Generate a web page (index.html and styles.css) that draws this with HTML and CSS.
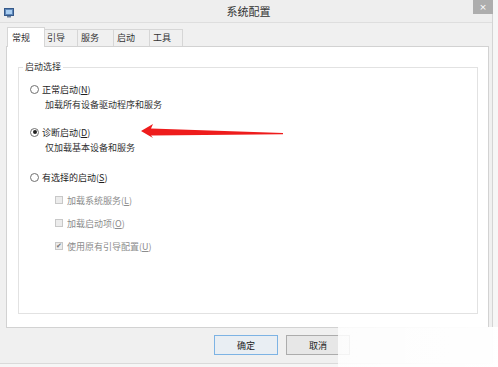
FILE: index.html
```html
<!DOCTYPE html>
<html lang="zh-CN">
<head>
  <meta charset="UTF-8" />
  <title>系统配置</title>
  <link rel="stylesheet" href="styles.css">
</head>
<body>
  <div class="window">
    <div class="titlebar">
      <svg class="app-icon" width="10" height="10" viewBox="0 0 10 10">
        <rect x="0.5" y="0.5" width="9" height="7" fill="#5d86b8" stroke="#35598a"/>
        <rect x="2" y="2" width="6" height="4" fill="#a9cdf0"/>
        <rect x="3" y="8" width="4" height="1.5" fill="#6b7f99"/>
      </svg>
      <div class="title">系统配置</div>
      <div class="close">&times;</div>
    </div>

    <div class="tabs">
      <div class="tab active">常规</div>
      <div class="tab">引导</div>
      <div class="tab wide">服务</div>
      <div class="tab wide">启动</div>
      <div class="tab narrow">工具</div>
    </div>

    <div class="panel">
      <div class="group">
        <div class="group-title">启动选择</div>

        <div class="option first">
          <span class="radio"></span>
          <span>正常启动(<u>N</u>)</span>
        </div>
        <div class="desc">加载所有设备驱动程序和服务</div>

        <div class="option second">
          <span class="radio checked"></span>
          <span>诊断启动(<u>D</u>)</span>
        </div>
        <div class="desc">仅加载基本设备和服务</div>

        <div class="option third">
          <span class="radio"></span>
          <span>有选择的启动(<u>S</u>)</span>
        </div>

        <div class="check">
          <span class="box"></span>
          <span>加载系统服务(<u>L</u>)</span>
        </div>
        <div class="check">
          <span class="box"></span>
          <span>加载启动项(<u>O</u>)</span>
        </div>
        <div class="check">
          <span class="box checked">&#10004;</span>
          <span>使用原有引导配置(<u>U</u>)</span>
        </div>
      </div>
    </div>

    <div class="footer">
      <button class="btn default">确定</button>
      <button class="btn">取消</button>
    </div>
  </div>

  <!-- 截图上的红色箭头标注 -->
  <svg class="arrow" width="498" height="367" viewBox="0 0 498 367">
    <polygon points="141,131 153,124 151,128.5 283,133 283,134.2 151,135.5 153,138" fill="#ee1c1c"/>
  </svg>
  <div class="watermark"></div>
</body>
</html>
```

FILE: styles.css
```css
body {
  margin: 0;
  width: 498px;
  height: 367px;
  overflow: hidden;
  background-color: #f6f6f6;
  font-family: "Noto Sans CJK SC", "Microsoft YaHei", sans-serif;
  font-size: 9px;
  color: #222;
  position: relative;
}
.window {
  width: 492px;
  height: 363px;
  background-color: #f0f0f0;
  border-right: 1px solid #d4d4d4;
  border-bottom: 1px solid #dadada;
}
.titlebar {
  height: 22px;
  border-bottom: 1px solid #dedede;
  background-color: #eeeeee;
  display: flex;
  align-items: flex-start;
}
.app-icon {
  margin: 8px 0 0 4px;
}
.title {
  flex: 1;
  text-align: center;
  font-size: 11px;
  line-height: 22px;
  color: #333;
  padding-left: 10px;
}
.close {
  width: 20px;
  height: 14px;
  margin-right: -1px;
  background-color: #adadad;
  color: #fff;
  font-size: 9px;
  line-height: 14px;
  text-align: center;
  font-family: "DejaVu Sans", sans-serif;
}
.tabs {
  height: 23px;
  box-sizing: border-box;
  padding: 4px 0 0 7px;
  display: flex;
  align-items: flex-end;
}
.tab {
  width: 33px;
  height: 17px;
  box-sizing: border-box;
  border: 1px solid #d6d6d6;
  border-bottom: none;
  border-left: none;
  background-color: #f0f0f0;
  line-height: 16px;
  padding-left: 2px;
  color: #333;
}
.tab.wide {
  width: 36px;
  padding-left: 3px;
}
.tab.narrow {
  width: 33px;
  padding-left: 3px;
}
.tab.active {
  width: 38px;
  height: 20px;
  margin-bottom: -1px;
  border-left: 1px solid #d6d6d6;
  background-color: #fff;
  padding-left: 4px;
  line-height: 19px;
  position: relative;
  z-index: 1;
}
.panel {
  margin-left: 6px;
  width: 483px;
  height: 282px;
  box-sizing: border-box;
  background-color: #fff;
  border: 1px solid #d2d2d2;
  padding: 20px 10px 0 11px;
}
.group {
  height: 247px;
  box-sizing: border-box;
  border: 1px solid #e2e2e2;
}
.group-title {
  width: fit-content;
  margin: -9px 0 0 4px;
  padding: 0 2px;
  background-color: #fff;
  line-height: 16px;
  color: #333;
}
.option {
  display: flex;
  align-items: center;
  height: 16px;
  padding-left: 11px;
  color: #1e1e1e;
}
.option.first {
  margin-top: 6px;
}
.option.second {
  margin-top: 11px;
}
.option.third {
  margin-top: 13px;
}
.radio {
  width: 9px;
  height: 9px;
  box-sizing: border-box;
  border: 1px solid #707070;
  border-radius: 50%;
  background-color: #fff;
  margin-right: 3px;
  display: flex;
  align-items: center;
  justify-content: center;
}
.radio.checked::after {
  content: "";
  width: 4px;
  height: 4px;
  border-radius: 50%;
  background-color: #222;
}
.desc {
  height: 16px;
  line-height: 16px;
  padding-left: 26px;
  color: #333;
}
.check {
  display: flex;
  align-items: center;
  height: 16px;
  padding-left: 36px;
  margin-top: 7px;
  color: #8c8c8c;
}
.box {
  width: 8px;
  height: 8px;
  box-sizing: border-box;
  border: 1px solid #c8c8c8;
  background-color: #ececec;
  margin-right: 4px;
  font-size: 7px;
  line-height: 6px;
  color: #777;
  text-align: center;
  font-family: "DejaVu Sans", sans-serif;
}
.footer {
  display: flex;
  padding: 7px 0 0 214px;
  gap: 8px;
}
.btn {
  width: 64px;
  height: 20px;
  font-family: inherit;
  font-size: 9px;
  color: #222;
  background-color: #e7e7e7;
  border: 1px solid #acacac;
  padding: 0;
}
.btn.default {
  border-color: #7db3e4;
  background-color: #e9eef3;
}
.arrow {
  position: absolute;
  left: 0;
  top: 0;
}
.watermark {
  position: absolute;
  left: 338px;
  top: 327px;
  width: 160px;
  height: 40px;
  background: linear-gradient(to right, rgba(255, 255, 255, 0.85), rgba(255, 255, 255, 0.97));
}
```
